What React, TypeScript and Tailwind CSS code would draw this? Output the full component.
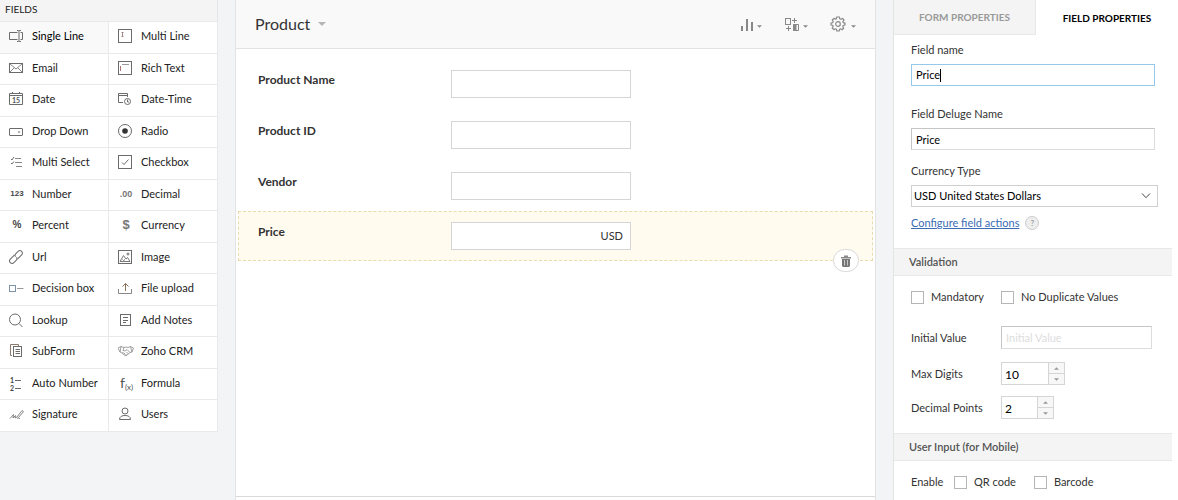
import { useState } from 'react'
import type { ReactNode } from 'react'

function Svg({ children }: { children: ReactNode }) {
  return (
    <svg className="h-4 w-4 shrink-0" viewBox="0 0 16 16" fill="none" stroke="#6b6b6b" strokeWidth="1" aria-hidden="true">
      {children}
    </svg>
  )
}

const glyph = "w-4 shrink-0 text-center font-['Liberation_Sans',sans-serif] font-bold"

const icons: Record<string, ReactNode> = {
  single: (
    <Svg>
      <path d="M8.500 4.500H0.500V11.500H8.500M11.500 4.500H13.500V11.500H11.500" />
      <path d="M10 3V13M8 2.500H9.500L10 3L10.500 2.500H12M8 13.500H9.500L10 13L10.500 13.500H12" />
    </Svg>
  ),
  multi: (
    <Svg>
      <rect x="0.500" y="1.500" width="13" height="13" />
      <path d="M4.500 5V8M3.500 4.500H5.500M3.500 8.500H5.500" stroke="#a08585" />
    </Svg>
  ),
  email: (
    <Svg>
      <rect x="0.500" y="3.500" width="13" height="9" />
      <path d="M0.500 3.500L7 9L13.500 3.500M0.500 12.500L5 8M13.500 12.500L9 8" strokeWidth="0.800" />
    </Svg>
  ),
  rich: (
    <Svg>
      <rect x="0.500" y="1.500" width="13" height="13" />
      <path d="M4 4.500H11" stroke="#999" />
      <path d="M2.500 6V11" stroke="#b07575" />
    </Svg>
  ),
  date: (
    <Svg>
      <path d="M0.500 2.500H13.500V13.500H0.500ZM0.500 4.500H13.500M3.500 1V3M10.500 1V3" />
      <text x="3" y="12" fontSize="7" fontWeight="700" fontFamily="Lato, sans-serif" fill="#555" stroke="none">15</text>
    </Svg>
  ),
  datetime: (
    <Svg>
      <path d="M5 11.500H0.500V2.500H9.500V6M0.500 4.500H9.500" />
      <circle cx="9.500" cy="10.500" r="3" />
      <path d="M9.500 8.500V11H11" />
    </Svg>
  ),
  dropdown: (
    <Svg>
      <rect x="0.500" y="5.500" width="13" height="7" rx="0.500" />
      <path d="M8.500 8.500H11.500L10 10.300Z" fill="#777" stroke="none" />
    </Svg>
  ),
  radio: (
    <Svg>
      <circle cx="7" cy="8" r="6.500" />
      <circle cx="7" cy="8" r="2.800" fill="#333" stroke="none" />
    </Svg>
  ),
  multiselect: (
    <Svg>
      <path d="M6 4.500H12M6 8.500H13M7 12.500H13" stroke="#888" />
      <path d="M2 5L3 6L5 3M2 9L3 10L5 7.500" stroke="#666" strokeWidth="0.900" />
    </Svg>
  ),
  checkbox: (
    <Svg>
      <rect x="0.500" y="1.500" width="13" height="13" />
      <path d="M4 8.500L6 10.500L10.500 5.500" />
    </Svg>
  ),
  number: <span className={`${glyph} text-[8px] text-[#444]`}>123</span>,
  decimal: <span className={`${glyph} text-[9px] text-[#777]`}>.00</span>,
  percent: <span className={`${glyph} text-[10px] text-[#444]`}>%</span>,
  currency: <span className={`${glyph} text-[13px] text-[#777]`}>$</span>,
  url: (
    <Svg>
      <g transform="rotate(-45 7 8)">
        <path d="M7.500 5.500H1.500A2.500 2.500 0 0 0 1.500 10.500H5A2.500 2.500 0 0 0 7.200 8.500" />
        <path d="M6.500 10.500H12.500A2.500 2.500 0 0 0 12.500 5.500H9A2.500 2.500 0 0 0 6.800 7.500" />
      </g>
    </Svg>
  ),
  image: (
    <Svg>
      <rect x="0.500" y="1.500" width="13" height="13" />
      <path d="M2 12.500L5.500 6.500L8 10L9.500 8.500L12 12.500ZM4.500 10.500L5.500 11.500L7 10.500" strokeWidth="0.900" />
      <circle cx="10" cy="5" r="1" />
    </Svg>
  ),
  decision: (
    <Svg>
      <rect x="0.500" y="5.500" width="6" height="6" stroke="#7d93a8" />
      <path d="M8 8.500H14.500" stroke="#999" />
    </Svg>
  ),
  upload: (
    <Svg>
      <path d="M0.500 9V13.500H13.500V9" stroke="#888" />
      <path d="M7.500 11V3.500M4.500 6.500L7.500 3.500L10.500 6.500" stroke="#8c6f55" />
    </Svg>
  ),
  lookup: (
    <Svg>
      <circle cx="6" cy="7.500" r="5.500" />
      <path d="M10 11.500L13.500 15" />
    </Svg>
  ),
  notes: (
    <Svg>
      <rect x="2.500" y="2.500" width="10" height="11" />
      <path d="M5 5.500H10M5 8.500H10M5 10.500H8" />
    </Svg>
  ),
  subform: (
    <Svg>
      <path d="M3 12.500H1.500V1.500H9.500V3" stroke="#8b7a70" />
      <rect x="4.500" y="3.500" width="8" height="10" />
      <path d="M6.500 6.500H11M6.500 8.500H11M6.500 10.500H11" />
    </Svg>
  ),
  crm: (
    <Svg>
      <g strokeWidth="0.800" stroke="#888">
        <path d="M0 5L3 3.500L6 4.500L8 4L10 4.500L12.500 3.500L15.500 5L14 9L12 9.500L8 13L3.500 9.500L2 9Z" />
        <path d="M6 4.500L5 7.500L7 8L9 6.500L12 9.500M3 3.500L2 9M12.500 3.500L14 9M4 10.500L5.500 9M5.500 11.500L7 10M8.500 9L10.500 11M7 12.500L8.500 11" />
      </g>
    </Svg>
  ),
  autonumber: (
    <Svg>
      <path d="M6 5.500H12M6 13.500H12" />
      <g fontSize="7" fontWeight="700" fontFamily="Lato, sans-serif" fill="#444" stroke="none">
        <text x="1" y="8">1</text>
        <text x="1" y="16">2</text>
      </g>
    </Svg>
  ),
  formula: (
    <span className="w-4 shrink-0 pl-0.5 text-sm text-[#555]">
      f<sub className="text-[8px]">(x)</sub>
    </span>
  ),
  signature: (
    <Svg>
      <path d="M1 12.500L4.500 8.500L4 12L6.500 9.500L6 12L8 11L13 4.500L14.500 5.500L9.500 11.500L8 12.500M9.500 12.500H11" strokeWidth="0.800" />
    </Svg>
  ),
  users: (
    <Svg>
      <circle cx="7" cy="5" r="3" />
      <path d="M1.500 13.500C1.500 10.500 4 9.500 7 9.500S12.500 10.500 12.500 13.500Z" />
    </Svg>
  ),
}

const fieldRows = [
  [['single', 'Single Line'], ['multi', 'Multi Line']],
  [['email', 'Email'], ['rich', 'Rich Text']],
  [['date', 'Date'], ['datetime', 'Date-Time']],
  [['dropdown', 'Drop Down'], ['radio', 'Radio']],
  [['multiselect', 'Multi Select'], ['checkbox', 'Checkbox']],
  [['number', 'Number'], ['decimal', 'Decimal']],
  [['percent', 'Percent'], ['currency', 'Currency']],
  [['url', 'Url'], ['image', 'Image']],
  [['decision', 'Decision box'], ['upload', 'File upload']],
  [['lookup', 'Lookup'], ['notes', 'Add Notes']],
  [['subform', 'SubForm'], ['crm', 'Zoho CRM']],
  [['autonumber', 'Auto Number'], ['formula', 'Formula']],
  [['signature', 'Signature'], ['users', 'Users']],
]

function Caret({ className }: { className: string }) {
  return (
    <svg className={className} viewBox="0 0 8 4" fill="currentColor" aria-hidden="true">
      <path d="M0 0H8L4 4Z" />
    </svg>
  )
}

function FieldPalette() {
  return (
    <aside className="w-[218px] shrink-0">
      <h2 className="h-[21px] border-r border-[#e6e6e6] bg-[#f4f4f4] pl-[5px] text-[10px] leading-[19px] text-[#222]">FIELDS</h2>
      <div>
        {fieldRows.map((row) => (
          <div key={row[0][0]} className="grid h-8 grid-cols-2 even:h-[31px] last:h-[33px] last:border-b last:border-[#e9e9e9]">
            {row.map(([id, label]) => (
              <button
                key={id}
                className={`flex items-center gap-[7px] border-t border-r border-[#e9e9e9] pb-[3px] pl-[9px] text-left ${
                  id === 'single' ? 'bg-[#f9f9f9] text-black' : 'bg-white text-[#222]'
                }`}
              >
                {icons[id]}
                <span className="whitespace-nowrap">{label}</span>
              </button>
            ))}
          </div>
        ))}
      </div>
    </aside>
  )
}

function FormRow({ id, label, selected }: { id: string; label: string; selected?: boolean }) {
  return (
    <div
      className={`relative flex border border-dashed pl-[19px] ${
        selected ? 'h-[50px] border-[#e8dcae] bg-[#fffbef] pt-[10px]' : 'h-[51px] border-transparent pt-[11px]'
      }`}
    >
      <label htmlFor={id} className="w-[193px] shrink-0 pt-0.5 text-xs font-bold text-[#333]">
        {label}
      </label>
      <div className="flex h-7 w-[180px] items-center border border-[#d5d5d5] bg-white">
        <input id={id} className="h-full min-w-0 flex-1 px-2 outline-none" />
        {selected && <span className="pr-[7px] text-[#333]">USD</span>}
      </div>
      {selected && (
        <button
          aria-label="Delete field"
          className="absolute right-[13px] -bottom-3 flex h-[23px] w-[26px] items-center justify-center rounded-full border border-[#d9d9d9] bg-white"
        >
          <svg className="h-3 w-3" viewBox="0 0 12 12" aria-hidden="true">
            <path d="M4 0.500H8V2H11V3.500H1V2H4Z" fill="#8a8a8a" />
            <path d="M2 4H10V11L9 12H3L2 11Z" fill="#777" />
            <path d="M4.500 5V10.500M7.500 5V10.500" stroke="#c9c9c9" />
          </svg>
        </button>
      )}
    </div>
  )
}

function FormCanvas() {
  return (
    <main className="flex min-w-0 flex-1 flex-col border-x border-[#e2e4e4] bg-white">
      <header className="flex h-[49px] shrink-0 items-center justify-between border-b border-[#e2e2e2] bg-[#f9f9f9] pr-[19px] pl-[19px]">
        <button className="flex items-center gap-2 text-base text-[#333]">
          Product
          <Caret className="h-1 w-2 text-[#b5b5b5]" />
        </button>
        <div className="flex items-center gap-[22px] text-[#888]">
          <button aria-label="Reports" className="flex items-center gap-[3px]">
            <svg className="h-4 w-[14px]" viewBox="0 0 14 16" stroke="currentColor" strokeWidth="2">
              <path d="M2 10V15M7 3V15M12 6V15" />
            </svg>
            <Caret className="mt-1 h-[3px] w-[5px]" />
          </button>
          <button aria-label="Workflow" className="flex items-center gap-[3px]">
            <svg className="h-4 w-4" viewBox="0 0 16 16" fill="none" stroke="currentColor" strokeWidth="1">
              <rect x="1.500" y="2.500" width="5" height="6" />
              <path d="M9.500 8.500H14.500V14.500H9.500Z" />
              <path d="M9.500 8.500H12V14.500H9.500Z" fill="currentColor" />
              <path d="M8 4.500H13M10.500 2V7M2 12.500H7M4.500 10V15" />
            </svg>
            <Caret className="mt-1 h-[3px] w-[5px]" />
          </button>
          <button aria-label="Settings" className="flex items-center gap-[5px]">
            <svg className="h-4 w-4" viewBox="0 0 16 16" fill="none" stroke="currentColor" strokeWidth="1.200">
              <path d="M6.600 1H9.400L9.800 2.800L11 3.300L12.600 2.400L14 4.200L12.900 5.700L13.200 6.700L15 7.200V9L13.200 9.500L12.800 10.700L13.700 12.200L12 13.800L10.500 12.800L9.600 13.200L9.200 15H6.800L6.400 13.200L5.400 12.800L3.900 13.700L2.200 12L3.200 10.500L2.800 9.400L1 9V7L2.800 6.600L3.200 5.500L2.300 4L4 2.300L5.500 3.200L6.300 2.800Z" strokeLinejoin="round" />
              <circle cx="8" cy="8" r="2.300" />
            </svg>
            <Caret className="mt-1 h-[3px] w-[5px]" />
          </button>
        </div>
      </header>
      <form className="mb-[3px] flex-1 border-b border-[#d9d9d9] px-0.5 pt-[9px]">
        <FormRow id="product-name" label="Product Name" />
        <FormRow id="product-id" label="Product ID" />
        <FormRow id="vendor" label="Vendor" />
        <FormRow id="price" label="Price" selected />
      </form>
    </main>
  )
}

function Tick({ label }: { label: string }) {
  return (
    <label className="flex items-center gap-[7px]">
      <input type="checkbox" className="h-[13px] w-[13px] appearance-none border border-[#b5b5b5] bg-white checked:bg-gray-500" />
      {label}
    </label>
  )
}

function Stepper({ id, label, start, inputClass }: { id: string; label: string; start: number; inputClass: string }) {
  const [value, setValue] = useState(start)
  return (
    <div className="flex h-[23px] items-center">
      <label htmlFor={id} className="w-[90px]">{label}</label>
      <div className="flex h-full border border-[#d5d5d5]">
        <input
          id={id}
          value={value}
          onChange={(e) => setValue(Number(e.target.value) || 0)}
          className={`${inputClass} pt-[3px] pl-[3px] text-xs text-black outline-none`}
        />
        <div className="flex w-4 flex-col border-l border-[#d5d5d5] bg-[#f7f7f7] text-[#999]">
          <button aria-label={`Increase ${label}`} onClick={() => setValue(value + 1)} className="flex flex-1 items-center justify-center border-b border-[#d5d5d5]">
            <Caret className="h-[3px] w-[5px] rotate-180" />
          </button>
          <button aria-label={`Decrease ${label}`} onClick={() => setValue(value - 1)} className="flex flex-1 items-center justify-center">
            <Caret className="h-[3px] w-[5px]" />
          </button>
        </div>
      </div>
    </div>
  )
}

function Properties() {
  const [name, setName] = useState('Price')
  const section = 'h-7 border-y border-[#e8e8e8] bg-[#f4f4f4] pl-[15px] leading-[26px] font-semibold text-[#555]'
  return (
    <aside className="w-[285px] shrink-0 border-l border-[#e2e4e4] bg-white text-[#333]">
      <div className="grid h-[35px] grid-cols-2 text-[10px] font-bold" role="tablist">
        <button role="tab" aria-selected="false" className="border-r border-b border-[#e8e8e8] bg-[#f4f4f4] text-[#999]">
          FORM PROPERTIES
        </button>
        <button role="tab" aria-selected="true" className="text-black">
          FIELD PROPERTIES
        </button>
      </div>

      <div className="mr-[23px] ml-[17px] pt-[7px]">
        <label htmlFor="field-name" className="block">Field name</label>
        <div className="mt-1.5 flex h-[22px] items-center border border-[#96c8ec] pl-1">
          <input
            id="field-name"
            value={name}
            onChange={(e) => setName(e.target.value)}
            className="field-sizing-content text-black outline-none"
          />
          <span className="h-[13px] w-px bg-black" />
        </div>
        <label htmlFor="deluge-name" className="mt-5 block">Field Deluge Name</label>
        <input
          id="deluge-name"
          defaultValue="Price"
          className="mt-1.5 block h-[22px] w-full border border-[#dcdcdc] border-t-[#c5c5c5] border-l-[#c5c5c5] pl-1 text-black"
        />
      </div>
      <div className="mr-5 ml-[17px]">
        <label htmlFor="currency" className="mt-[13px] block">Currency Type</label>
        <div className="relative mt-1.5">
          <select id="currency" className="block h-[22px] w-full appearance-none border border-[#d0d0d0] pl-0.5 text-black">
            <option>USD United States Dollars</option>
          </select>
          <svg className="pointer-events-none absolute top-2 right-[7px] h-1.5 w-[10px]" viewBox="0 0 10 6" fill="none" stroke="#444">
            <path d="M1 0.500L5 4.700L9 0.500" />
          </svg>
        </div>
        <div className="mt-2 flex h-4 items-center gap-1.5">
          <a href="#" className="text-[#3b6cb4] underline">Configure field actions</a>
          <button aria-label="Help" className="h-[14px] w-[14px] rounded-full border border-[#ccc] bg-[#eee] text-[8px] leading-[11px] text-[#888]">?</button>
        </div>
      </div>

      <div className="mt-[17px] mr-1.5">
        <h3 className={section}>Validation</h3>
        <div className="mt-[13px] flex h-4 gap-[17px] pl-[17px]">
          <Tick label="Mandatory" />
          <Tick label="No Duplicate Values" />
        </div>
        <div className="mt-[21px] mb-[13px] flex h-[23px] items-center pl-[17px]">
          <label htmlFor="initial" className="w-[90px]">Initial Value</label>
          <input
            id="initial"
            placeholder="Initial Value"
            className="h-full w-[151px] border border-[#dcdcdc] border-t-[#c5c5c5] border-l-[#c5c5c5] pl-1 placeholder:text-[#ddd]"
          />
        </div>
        <div className="flex flex-col gap-[11px] pl-[17px]">
          <Stepper id="max-digits" label="Max Digits" start={10} inputClass="w-[46px]" />
          <Stepper id="decimal-points" label="Decimal Points" start={2} inputClass="w-[35px]" />
        </div>
      </div>

      <div className="mt-[14px] mr-1.5">
        <h3 className={section}>User Input (for Mobile)</h3>
        <div className="mt-[13px] flex h-4 pl-[17px]">
          <span className="w-[43px]">Enable</span>
          <div className="flex gap-[18px]">
            <Tick label="QR code" />
            <Tick label="Barcode" />
          </div>
        </div>
      </div>
    </aside>
  )
}

export default function App() {
  return (
    <div className="flex min-h-screen gap-[17px] bg-[#f3f4f6] font-['Lato',sans-serif] text-[11px] leading-4">
      <FieldPalette />
      <FormCanvas />
      <Properties />
    </div>
  )
}
